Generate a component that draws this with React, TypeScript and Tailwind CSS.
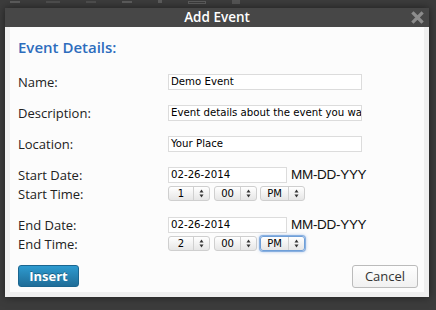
import React from "react";

const label = "w-[150px] shrink-0 text-[13px] leading-[16px] text-[#222] font-['Open_Sans',sans-serif]";
const input =
  "h-[16px] border border-[#dcdcdc] bg-white px-[2px] text-[10.2px] leading-[14px] text-black font-['DejaVu_Sans',sans-serif] overflow-hidden whitespace-nowrap";
const hint = "ml-[4px] text-[13.5px] leading-[16px] text-[#111] font-['Liberation_Sans',sans-serif] tracking-[-0.3px]";

function Arrows() {
  return (
    <svg width="5" height="9" viewBox="0 0 5 9" className="text-[#333]">
      <path d="M2.5 0.5 L4.5 3.5 L0.5 3.5 Z" fill="currentColor" />
      <path d="M2.5 8.5 L4.5 5.5 L0.5 5.5 Z" fill="currentColor" />
    </svg>
  );
}

function Select({ value, width, left, focused }: { value: string; width: string; left: string; focused?: boolean }) {
  return (
    <div
      className={
        "flex h-[15px] items-stretch rounded-[3px] bg-gradient-to-b from-white to-[#e6e6e6] text-[10px] leading-[13px] text-black font-['DejaVu_Sans',sans-serif] " +
        width +
        (focused
          ? " border border-[#6f9fd8] shadow-[0_0_0_1px_rgba(120,165,220,0.8),0_0_3px_1px_rgba(100,150,220,0.5)]"
          : " border border-[#cfcfcf]")
      }
    >
      <span className={"flex items-center justify-center " + left}>{value}</span>
      <span className="w-px bg-[#d0d0d0]" />
      <span className="flex flex-1 items-center justify-center">
        <Arrows />
      </span>
    </div>
  );
}

function TimeRow({ hour, focusAmPm }: { hour: string; focusAmPm?: boolean }) {
  return (
    <div className="flex items-center">
      <Select value={hour} width="w-[42px]" left="w-[24px]" />
      <div className="ml-[4px]">
        <Select value="00" width="w-[43px]" left="w-[25px]" />
      </div>
      <div className="ml-[3px]">
        <Select value="PM" width="w-[45px]" left="w-[27px]" focused={focusAmPm} />
      </div>
    </div>
  );
}

export default function App() {
  return (
    <div className="relative h-[310px] w-[436px] overflow-hidden bg-[#3c3c3c]">
      {/* faint page behind the overlay */}
      <div className="flex h-[8px] items-start gap-[26px] pl-[10px] opacity-40">
        <div className="mt-[1px] h-[2px] w-[10px] bg-[#888]" />
        <div className="mt-[1px] h-[2px] w-[14px] bg-[#666]" />
        <div className="mt-[1px] h-[2px] w-[10px] bg-[#666]" />
        <div className="mt-[1px] h-[2px] w-[10px] bg-[#888]" />
        <div className="mt-[0px] h-[3px] w-[4px] bg-[#888]" />
        <div className="mt-[1px] h-[3px] w-[18px] border border-[#888]" />
        <div className="mt-[0px] h-[4px] w-[8px] bg-[#777]" />
      </div>

      <div className="ml-[5px] w-[424px] shadow-[0_0_8px_rgba(0,0,0,0.5)]">
        {/* header */}
        <div className="relative flex h-[19px] items-center justify-center bg-[#474747]">
          <span className="text-[13.5px] font-semibold leading-[19px] text-white font-['Open_Sans',sans-serif]">Add Event</span>
          <svg className="absolute right-[5px] top-[3px]" width="13" height="13" viewBox="0 0 13 13">
            <path d="M2.5 2.5 L10.5 10.5 M10.5 2.5 L2.5 10.5" stroke="#8c8c8c" strokeWidth="3.2" strokeLinecap="square" />
          </svg>
        </div>

        {/* body */}
        <div className="border-x-[5px] border-b-[5px] border-[#efefef] bg-[#fcfcfc]">
          <div className="flex h-[265px] flex-col pl-[8px] pr-[6px] pt-[10px]">
            <div className="h-[20px] text-[15px] font-semibold leading-[20px] text-[#2d6dbd] font-['Open_Sans',sans-serif]">
              Event Details:
            </div>

            <div className="mt-[17px] flex h-[16px] items-center">
              <span className={label}>Name:</span>
              <div className={input + " w-[194px]"}>Demo Event</div>
            </div>
            <div className="mt-[15px] flex h-[16px] items-center">
              <span className={label}>Description:</span>
              <div className={input + " w-[194px]"}>Event details about the event you wa</div>
            </div>
            <div className="mt-[15px] flex h-[16px] items-center">
              <span className={label}>Location:</span>
              <div className={input + " w-[194px]"}>Your Place</div>
            </div>

            <div className="mt-[15px] flex h-[16px] items-center">
              <span className={label}>Start Date:</span>
              <div className={input + " w-[119px]"}>02-26-2014</div>
              <span className={hint}>MM-DD-YYY</span>
            </div>
            <div className="mt-[3px] flex h-[15px] items-center">
              <span className={label}>Start Time:</span>
              <TimeRow hour="1" />
            </div>

            <div className="mt-[16px] flex h-[16px] items-center">
              <span className={label}>End Date:</span>
              <div className={input + " w-[119px]"}>02-26-2014</div>
              <span className={hint}>MM-DD-YYY</span>
            </div>
            <div className="mt-[3px] flex h-[15px] items-center">
              <span className={label}>End Time:</span>
              <TimeRow hour="2" focusAmPm />
            </div>

            <div className="mt-[14px] flex items-start justify-between">
              <button className="h-[22px] w-[61px] rounded-[3px] border border-[#1b6690] bg-gradient-to-b from-[#2e9bd0] to-[#1f6d98] text-[13px] font-bold leading-[20px] text-white [text-shadow:0_-1px_0_rgba(0,0,0,0.3)] font-['Open_Sans',sans-serif]">
                Insert
              </button>
              <button className="h-[23px] w-[66px] rounded-[3px] border border-[#bbbbbb] bg-gradient-to-b from-[#fefefe] to-[#f1f1f1] text-[13px] leading-[21px] text-[#333] font-['Open_Sans',sans-serif]">
                Cancel
              </button>
            </div>
          </div>
        </div>
      </div>
    </div>
  );
}
